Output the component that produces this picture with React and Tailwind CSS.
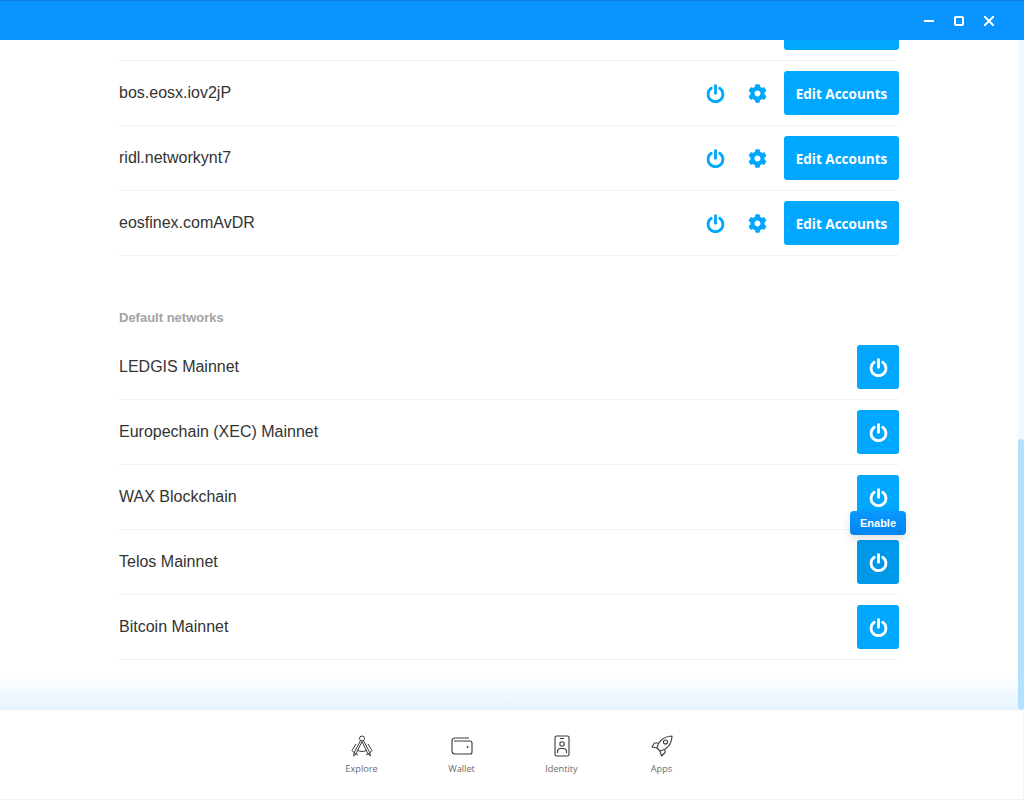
import React from "react";

const customNetworks = ["bos.eosx.iov2jP", "ridl.networkynt7", "eosfinex.comAvDR"];
const defaultNetworks = ["LEDGIS Mainnet", "Europechain (XEC) Mainnet", "WAX Blockchain", "Telos Mainnet", "Bitcoin Mainnet"];

function PowerIcon() {
  return (
    <svg viewBox="0 0 20 20" fill="none" stroke="currentColor" strokeWidth="3" strokeLinecap="round" className="w-[19px] h-[19px]">
      <path d="M10 1.700v8" />
      <path d="M5.500 4.500a7.800 7.800 0 1 0 9 0" />
    </svg>
  );
}

function GearIcon() {
  return (
    <svg viewBox="0 0 512 512" fill="currentColor" className="w-[19px] h-[19px]">
      <path d="M487.4 315.7l-42.6-24.6c4.3-23.2 4.3-47 0-70.2l42.6-24.6c4.9-2.8 7.1-8.6 5.5-14-11.1-35.6-30-67.8-54.7-94.6-3.8-4.1-10-5.1-14.8-2.3L380.8 110c-17.9-15.4-38.5-27.3-60.8-35.1V25.8c0-5.6-3.9-10.5-9.4-11.7-36.7-8.2-74.3-7.8-109.2 0-5.5 1.2-9.4 6.1-9.4 11.7V75c-22.2 7.9-42.8 19.8-60.8 35.1L88.7 85.5c-4.9-2.8-11-1.9-14.8 2.3-24.7 26.7-43.6 58.9-54.7 94.6-1.7 5.4.6 11.2 5.5 14L67.3 221c-4.3 23.2-4.3 47 0 70.2l-42.6 24.6c-4.9 2.8-7.1 8.6-5.5 14 11.1 35.6 30 67.8 54.7 94.6 3.8 4.1 10 5.1 14.8 2.3l42.6-24.6c17.9 15.4 38.5 27.3 60.8 35.1v49.2c0 5.6 3.9 10.5 9.4 11.7 36.7 8.2 74.3 7.8 109.2 0 5.500-1.2 9.4-6.1 9.4-11.7v-49.2c22.2-7.9 42.8-19.8 60.8-35.1l42.6 24.6c4.9 2.8 11 1.9 14.8-2.3 24.7-26.7 43.6-58.9 54.7-94.6 1.5-5.5-.7-11.3-5.6-14.1zM256 336c-44.1 0-80-35.9-80-80s35.9-80 80-80 80 35.9 80 80-35.9 80-80 80z" />
    </svg>
  );
}

function EditButton() {
  return (
    <button className="w-[115px] h-[44px] shrink-0 rounded-[3px] bg-[#00a7ff] text-white text-[13.500px] pt-[2px] font-bold font-['Open_Sans',sans-serif]">
      Edit Accounts
    </button>
  );
}

function CustomRow({ name }) {
  return (
    <div className="h-[65px] border-b border-[#eaf6fe] flex items-center">
      <span className="flex-1 text-base text-[#333333] font-['Liberation_Sans',sans-serif]">{name}</span>
      <div className="flex items-center text-[#00a7ff]">
        <PowerIcon />
        <div className="ml-[23px] mr-[17px]"><GearIcon /></div>
        <EditButton />
      </div>
    </div>
  );
}

function DefaultRow({ name, hovered, tooltip }) {
  return (
    <div className="h-[65px] border-b border-[#eaf6fe] flex items-center">
      <span className="flex-1 text-base text-[#333333] font-['Liberation_Sans',sans-serif]">{name}</span>
      <div className="relative">
        <button className={`w-[42px] h-[44px] rounded-[3px] flex items-center justify-center text-white ${hovered ? "bg-[#0099ea]" : "bg-[#00a7ff]"}`}>
          <PowerIcon />
        </button>
        {tooltip && (
          <div className="absolute left-[-7px] top-[-29px] w-[56px] h-[24px] rounded-[4px] bg-gradient-to-b from-[#0a99ff] to-[#0084f0] shadow-[0_4px_10px_rgba(0,0,0,0.12)] flex items-center justify-center text-white text-[11px] font-bold font-['Liberation_Sans',sans-serif]">
            {tooltip}
          </div>
        )}
      </div>
    </div>
  );
}

function NavItem({ label, children }) {
  return (
    <div className="w-[100px] flex flex-col items-center text-[#3a3a3a]">
      <div className="h-[24px] flex items-center justify-center">{children}</div>
      <span className="mt-[5px] text-[9.200px] leading-[12px] text-[#6b6b6b] font-['Open_Sans',sans-serif]">{label}</span>
    </div>
  );
}

export default function App() {
  return (
    <div className="w-[1024px] h-[800px] flex flex-col overflow-hidden bg-white">
      <header className="h-[40px] shrink-0 flex items-center justify-end bg-[#0a94ff] border-t border-[#0a7fe0] text-white">
        <div className="flex items-center gap-[20px] mr-[30px]">
          <svg width="10" height="10" viewBox="0 0 10 10" stroke="currentColor" strokeWidth="2"><path d="M0 5h10" /></svg>
          <svg width="10" height="10" viewBox="0 0 10 10" fill="none" stroke="currentColor" strokeWidth="2"><rect x="1" y="1" width="8" height="8" rx="1" /></svg>
          <svg width="10" height="10" viewBox="0 0 10 10" stroke="currentColor" strokeWidth="2"><path d="M0 0l10 10M10 0L0 10" /></svg>
        </div>
      </header>

      <div className="h-[670px] shrink-0 flex relative overflow-hidden">
        <main className="flex-1 pl-[119px] pr-[119px] overflow-hidden">
          <div className="h-[21px] border-b border-[#eaf6fe] flex items-end justify-end overflow-hidden">
            <div className="mb-[10px]"><EditButton /></div>
          </div>
          {customNetworks.map((n) => <CustomRow key={n} name={n} />)}
          <div className="mt-[54px] h-[16px] text-[13px] leading-[16px] font-bold text-[#a3a3a3] font-['Liberation_Sans',sans-serif]">Default networks</div>
          <div className="mt-[9px]">
            <DefaultRow name={defaultNetworks[0]} />
            <DefaultRow name={defaultNetworks[1]} />
            <DefaultRow name={defaultNetworks[2]} />
            <DefaultRow name={defaultNetworks[3]} hovered tooltip="Enable" />
            <DefaultRow name={defaultNetworks[4]} />
          </div>
        </main>
        <div className="w-[6px] shrink-0 bg-[#f3faff] flex flex-col justify-end">
          <div className="h-[271px] rounded-[3px] bg-[#b3e2ff]" />
        </div>
        <div className="absolute left-0 right-[6px] bottom-0 h-[36px] bg-gradient-to-b from-transparent to-[#e6f4ff] pointer-events-none" />
      </div>

      <footer className="h-[90px] shrink-0 border-b border-r border-[#eaf6fe] flex justify-center pt-[24px]">
        <div className="flex">
          <NavItem label="Explore">
            <svg width="22" height="22" viewBox="0 0 22 22" fill="none" stroke="currentColor" strokeWidth="1" strokeLinejoin="round">
              <circle cx="11" cy="3.500" r="2.500" />
              <path d="M9.500 5.500 3 18l-.4 3 2.300-2 6.100-12.500M12.500 5.500 19 18l.4 3-2.300-2-6.100-12.500" />
              <path d="M5 9 1 15.500c1.500 2 3.500 3.500 6 4.500M17 9l4 6.500c-1.500 2-3.500 3.500-6 4.500M6 15c3 2 7 2 10 0" />
            </svg>
          </NavItem>
          <NavItem label="Wallet">
            <svg width="22" height="18" viewBox="0 0 22 18" fill="none" stroke="currentColor" strokeWidth="1.100">
              <path d="M18 1H4a3 3 0 0 0-3 3v10a3 3 0 0 0 3 3h15a2 2 0 0 0 2-2V6a2 2 0 0 0-2-2H3" />
              <circle cx="16.500" cy="10" r="0.900" fill="currentColor" stroke="none" />
            </svg>
          </NavItem>
          <NavItem label="Identity">
            <svg width="16" height="22" viewBox="0 0 16 22" fill="none" stroke="currentColor" strokeWidth="1.100">
              <rect x="1" y="1" width="14" height="20" rx="1.500" />
              <path d="M6 3.500h4" />
              <circle cx="8" cy="9" r="2.200" />
              <path d="M3.500 18v-1.500a3 3 0 0 1 3-3h3a3 3 0 0 1 3 3V18" />
            </svg>
          </NavItem>
          <NavItem label="Apps">
            <svg width="22" height="22" viewBox="0 0 22 22" fill="none" stroke="currentColor" strokeWidth="1.100" strokeLinejoin="round">
              <path d="M6 13C7 7 12 1.500 21 1c-.3 9-6 14-12 15Z" />
              <circle cx="14.500" cy="7" r="2" />
              <path d="M7 8H3.500L1 12l5 1M14 14.500v3L10.500 21 9 16" />
            </svg>
          </NavItem>
        </div>
      </footer>
    </div>
  );
}
